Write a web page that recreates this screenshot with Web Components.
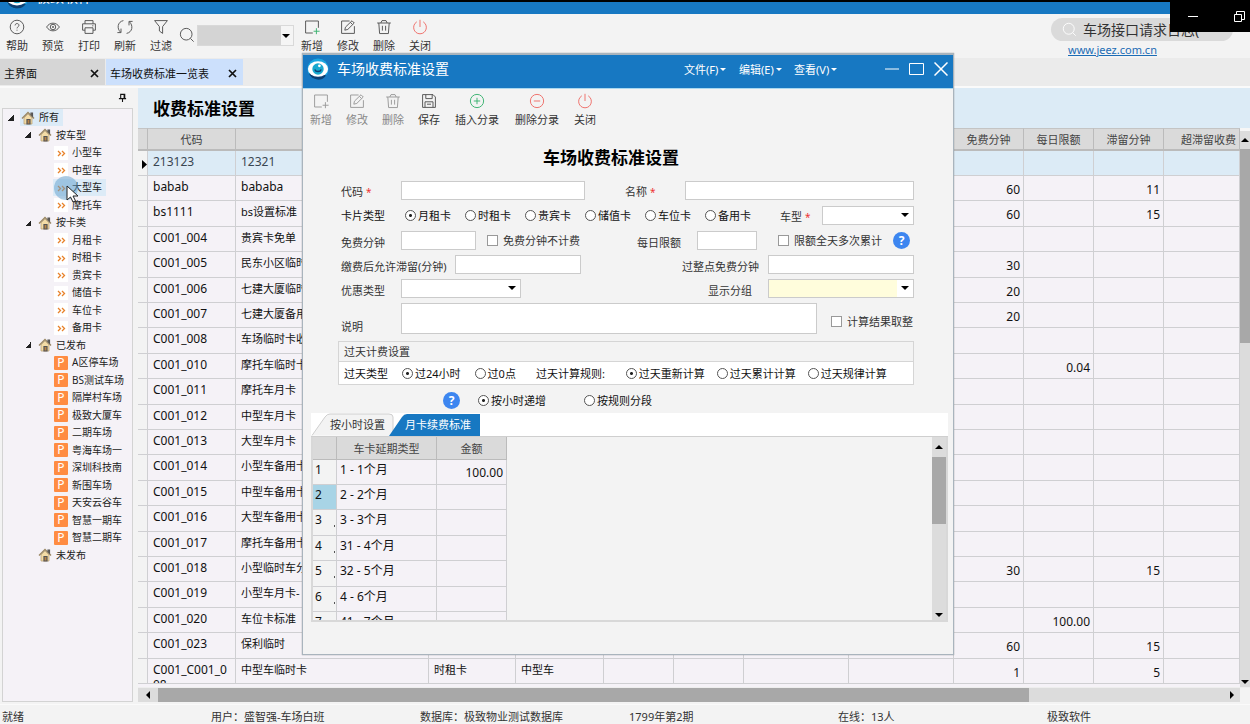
<!DOCTYPE html>
<html lang="zh-CN">
<head>
<meta charset="utf-8">
<title>极致软件</title>
<style>
html,body{margin:0;height:100%}
body{font:11px/15px "Noto Sans","Noto Sans CJK SC",sans-serif;color:#333;background:#f3f3f3;overflow:hidden}
</style>
</head>
<body>
<parking-app></parking-app>
<script>
const define=(name,html,setup)=>{
  const t=document.createElement('template');
  t.innerHTML=html;
  customElements.define(name,class extends HTMLElement{
    constructor(){super();this.attachShadow({mode:'open'}).append(t.content.cloneNode(true));}
    connectedCallback(){if(setup)setup.call(this,this.shadowRoot);}
  });
};

const house='<path d="M1 7.5 7 1.5l6 6" fill="none" stroke="#9a8763" stroke-width="1.4"/><path d="M3 7v6h8V7L7 3z" fill="#f3dca6" stroke="#b59c6e" stroke-width=".7"/><path d="M6 13V8.5h3V13z" fill="#b98548"/><path d="M10 2h1.5v3L10 3.6z" fill="#9a8763"/>';
const ICONS={
 help:[20,'<circle cx="10" cy="10" r="8.500"/><path d="M7.6 8c.1-3.2 4.9-3 4.8 0 0 1.700-2.400 1.900-2.400 3.700M10 13.400v1.200"/>'],
 eye:[20,'<path d="M2 10c4-6.4 12-6.4 16 0-4 6.4-12 6.4-16 0z"/><circle cx="10" cy="10" r="3.4"/><circle cx="10" cy="10" r=".8"/>'],
 print:[20,'<path d="M5 6V2h10v4M5 14H2V6h16v8h-3M5 11h10v7H5zM14 8.5h1.5"/>'],
 refresh:[20,'<path d="M8 2C.5 3.500-.5 12 4.500 16.500M5 12v5H.5M12 18c7.500-1.500 8.500-10 3.500-14.500M15 8V3h4.500"/>'],
 filter:[20,'<path d="M2 2h16l-6 7.500v8.500l-4-3V9.500z"/>'],
 search:[20,'<circle cx="9" cy="9" r="7.300"/><path d="m14.300 14.300 4 4"/>'],
 add:[20,'<path d="M11 17.500H2v-15h16V11"/><path class="acc" d="M15.500 11.500v7.500M12 15.300h7.500"/>'],
 edit:[20,'<path d="M18 9v9H2V2.500h10M6 14l.8-3.800L15 2.200l2.800 2.800-8 8zM13 4.200l2.800 2.800M7 17"/>'],
 trash:[20,'<path d="M1.500 5h17M6 5l1.500-3h5L14 5M3.500 5l1 13.200h11l1-13.200M8 8.500v6M12 8.500v6"/>'],
 power:[20,'<path d="M6 3.500C-1 8 2 18.500 10 18.500S21 8 14 3.500M10 1v9"/>'],
 save:[20,'<path d="M2 2h13l3 3v13H2zM6 2v5h8V2M5 18v-7h10v7M7.500 14h5"/>'],
 plus:[20,'<circle cx="10" cy="10" r="8.300"/><path d="M10 6v8M6 10h8"/>'],
 minus:[20,'<circle cx="10" cy="10" r="8.300"/><path d="M6 10h8"/>'],
 house:[14,house],
 logo:[24,'<circle cx="12" cy="12" r="11.500" fill="#1aa6e0" stroke="none"/><path d="M2 17a11 11 0 0 0 19 2l-4-1z" fill="#0c3f73" stroke="none"/><ellipse cx="12" cy="12" rx="11" ry="8.500" fill="#fff" stroke="none"/><circle cx="12" cy="12" r="6.200" fill="#17a8cf" stroke="none"/><path d="M8.500 12.500c1 3 6 3 7 0" stroke="#0c3f73" stroke-width="1.500"/><circle cx="13.500" cy="8.500" r="1.500" fill="#fff" stroke="none"/>'],
 pin:[10,'<path d="M3 1h4.500v4.500H3zM1 5.700h8M5 5.700V9.500M6.800 1v4.500" stroke="#111"/>']
};
define('app-icon','<style>:host{display:block;width:16px;height:16px;color:#555}svg{display:block;width:100%;height:100%;overflow:visible}.acc{stroke:var(--accent,currentColor)}</style>',function(r){
  const [n,p]=ICONS[this.getAttribute('name')];
  r.innerHTML+=`<svg viewBox="0 0 ${n} ${n}" fill="none" stroke="currentColor" stroke-width="1.2" aria-hidden="true">${p}</svg>`;
});

define('tool-button',`<style>:host{display:block;flex:none;width:36px;--accent:#3cb371}:host([wide]){width:60px}
button{all:unset;display:flex;flex-direction:column;align-items:center;gap:3px;width:100%;color:#333;cursor:default}
app-icon{color:#555}:host([tone=red]) app-icon{color:#ee6f6a}:host([tone=green]) app-icon{color:#3cb371}
:host([off]){--accent:#9a9a9a}:host([off]) button{color:#888}:host([off]) app-icon{color:#9a9a9a}</style>
<button type="button"><span id="i"></span><slot></slot></button>`,function(r){
  r.getElementById('i').innerHTML=`<app-icon name="${this.getAttribute('icon')}"></app-icon>`;
  r.querySelector('button').disabled=this.hasAttribute('off');
});

define('title-strip',`<style>:host{display:block;height:12px;border-top:2px solid #000;background:#1778c2;overflow:hidden;color:#fff}
div{display:flex;align-items:center;gap:7px;height:24px;margin-top:-17px;padding-left:5px;font-size:14px;line-height:20px}
app-icon{width:24px;height:24px}</style>
<div><app-icon name="logo"></app-icon><span>极致软件</span></div>`);

define('caption-box',`<style>:host{display:flex;justify-content:space-between;align-items:center;width:80px;height:32px;background:#000;box-sizing:border-box;padding:0 5px 0 18px}
button{all:unset;display:block}svg{display:block}</style>
<button type="button" aria-label="最小化"><svg width="10" height="10"><path d="M0 5.500h10" stroke="#fff"/></svg></button>
<button type="button" aria-label="还原"><svg width="11" height="11" fill="none" stroke="#fff"><path d="M.5 3.500h7v7h-7zM2.500 3.500v-3h8v8h-3"/></svg></button>`);

define('main-toolbar',`<style>:host{display:flex;align-items:flex-start;height:39px;padding-top:5px;background:#f3f3f3}
tool-button:first-of-type{margin-left:-1px}
.find{display:flex;align-items:center;width:115px;gap:2px;padding-top:5px;height:22px}
.combo{display:flex;box-sizing:border-box;width:97px;height:21px;border:1px solid #d9d9d9;background:#f5f5f5;position:relative}
input{all:unset;flex:1;background:#d4d4d4;margin-right:12px;min-width:0}
.combo::after{content:"";position:absolute;right:3px;top:8px;border:4px solid transparent;border-top-color:#000;border-bottom:0}
.right{margin-left:auto;width:199px}
.pill{display:flex;align-items:center;gap:6px;box-sizing:border-box;width:182px;height:23px;border-radius:12px;background:#dadada;padding-left:11px;font-size:14px;line-height:20px;margin-top:-1px}
.pill app-icon{color:#fff;flex:none;width:15px;height:15px}
.pill input{background:none;margin:0;color:#333;width:140px}
a{display:block;margin:1px 0 0 17px;color:#1b6cb5;text-decoration:underline}
</style>
<tool-button icon="help">帮助</tool-button><tool-button icon="eye">预览</tool-button><tool-button icon="print">打印</tool-button><tool-button icon="refresh">刷新</tool-button><tool-button icon="filter">过滤</tool-button>
<div class="find"><app-icon name="search"></app-icon><div class="combo"><input aria-label="查找"></div></div>
<tool-button icon="add">新增</tool-button><tool-button icon="edit">修改</tool-button><tool-button icon="trash">删除</tool-button><tool-button icon="power" tone="red">关闭</tool-button>
<div class="right"><div class="pill"><app-icon name="search"></app-icon><input aria-label="搜索" value="车场接口请求日志("></div><a href="#">www.jeez.com.cn</a></div>`);

define('doc-tabs',`<style>:host{display:flex;align-items:center;height:28px;background:#ebebeb;border-bottom:2px solid #fafafa;gap:1px;color:#111}
button{all:unset;box-sizing:border-box;display:flex;align-items:center;justify-content:space-between;height:26px;padding-top:2px;background:#d6d6d6;width:105px;padding:2px 6px 0 4px}
button[aria-selected=true]{background:#cce0fc;width:137px}svg{display:block}</style>
<button role="tab">主界面<svg width="9" height="9" stroke="#111" stroke-width="1.700"><path d="m1 1 7 7M8 1 1 8"/></svg></button>
<button role="tab" aria-selected="true">车场收费标准一览表<svg width="9" height="9" stroke="#111" stroke-width="1.700"><path d="m1 1 7 7M8 1 1 8"/></svg></button>`);

const TREE=[[0,'所有'],[1,'按车型'],[2,'小型车'],[2,'中型车'],[2,'大型车'],[2,'摩托车'],[1,'按卡类'],[2,'月租卡'],[2,'时租卡'],[2,'贵宾卡'],[2,'储值卡'],[2,'车位卡'],[2,'备用卡'],[1,'已发布'],
[3,'A区停车场'],[3,'BS测试车场'],[3,'隔岸村车场'],[3,'极致大厦车'],[3,'二期车场'],[3,'粤海车场一'],[3,'深圳科技南'],[3,'新围车场'],[3,'天安云谷车'],[3,'智慧一期车'],[3,'智慧二期车'],[1,'未发布']];
define('nav-tree',`<style>:host{display:flex;flex-direction:column;width:138px;flex:none;background:#f3f3f3}
.pin{display:flex;justify-content:flex-end;height:20px;padding:5px 11px 0 0;box-sizing:border-box}.pin app-icon{width:9px;height:10px}
ul{list-style:none;margin:0 5px 2px 2px;padding:0;flex:1;box-sizing:border-box;border:1px solid #d3d3d3;background:#f5f2f7;overflow:hidden;font-size:10px;color:#222;white-space:nowrap}
li{display:flex;align-items:center;height:17px;position:relative}li:nth-child(even){height:18px}
li i{flex:none;width:6px;height:6px;margin-right:7px}
li i.open{background:linear-gradient(135deg,transparent 50%,#222 50%)}
.l0{padding-left:5px}.l1{padding-left:22px}.l2,.l3{padding-left:51px}
.it{display:flex;align-items:center;height:17px;gap:4px;padding:0 4px 0 1px;margin-left:-1px}
.hot{background:#dcebf7}
app-icon{width:14px;height:14px}
.ar,.p{display:block;width:14px;height:14px;background:#fff}
.hot .ar{background:none}
.p{background:#ff8c42;color:#fff;text-align:center;font-size:12px;line-height:14px;border-radius:1px}
.mouse{position:absolute;left:50px;top:-3px;width:27px;height:36px;z-index:2}</style>
<div class="pin"><app-icon name="pin"></app-icon></div><ul></ul>`,function(r){
  r.querySelector('ul').innerHTML=TREE.map(([l,t])=>{
    const ico=l<2?'<app-icon name="house"></app-icon>':l==2?'<svg class="ar" viewBox="0 0 14 14" fill="none" stroke="#e8822a" stroke-width="1.3"><path d="m4 5 2.500 2.500L4 10M8 5l2.500 2.500L8 10"/></svg>':'<span class="p">P</span>';
    const mouse=t=='大型车'?'<svg class="mouse" viewBox="0 0 27 36"><circle cx="13" cy="12" r="12" fill="#5f9fcd" opacity=".5"/><path d="M14 10v14l3.500-3 2.500 5 2.500-1.200-2.500-4.800h5z" fill="#fff" stroke="#222"/></svg>':'';
    return `<li class="l${l}">${l<2?`<i class="${t!='未发布'?'open':''}"></i>`:''}<span class="it ${t=='所有'||t=='大型车'?'hot':''}">${ico}${t}</span>${mouse}</li>`;}).join('');
});

define('scroll-bar',`<style>:host{display:flex;align-items:center;background:#dcdcdc;flex:none}
:host([dir=v]){flex-direction:column}b{display:block;background:#a8a8a8}svg{display:block;flex:none}</style>`,function(r){
  const v=this.getAttribute('dir')=='v',[a,s,w]=this.getAttribute('thumb').split(',').map(Number);
  const tri=(p,m)=>`<svg width="8" height="8" style="margin:${v?m:0}px ${v?0:m}px"><path d="${p}" fill="#000"/></svg>`;
  r.innerHTML+=tri(v?'M0 6l4-4 4 4z':'M6 0v8L2 4z',a)+`<b style="flex:${s} 1 0;${v?'width:100%':'align-self:stretch'}"></b><span style="flex:${w} 1 0"></span>`+tri(v?'M0 2l4 4 4-4z':'M2 0v8l4-4z',v?1:4);
});

const ROWS=[['213123','12321'],['babab','bababa','60','','11'],['bs1111','bs设置标准','60','','15'],['C001_004','贵宾卡免单'],['C001_005','民东小区临时','30'],['C001_006','七建大厦临时','20'],['C001_007','七建大厦备用','20'],['C001_008','车场临时卡收'],['C001_010','摩托车临时卡','','0.04'],['C001_011','摩托车月卡'],['C001_012','中型车月卡'],['C001_013','大型车月卡'],['C001_014','小型车备用卡'],['C001_015','中型车备用卡'],['C001_016','大型车备用卡'],['C001_017','摩托车备用卡'],['C001_018','小型临时车分','30','','15'],['C001_019','小型车月卡-'],['C001_020','车位卡标准','','100.00'],['C001_023','保利临时','60','','15'],['C001_C001_008','中型车临时卡','1','','5']];
define('rate-grid',`<style>:host{display:flex;flex-direction:column;flex:1;min-width:0}
h1{margin:0;height:40px;box-sizing:border-box;padding:9px 0 0 15px;background:#dcebf6;font-size:17px;line-height:24px;color:#000}
.mid{display:flex;flex:1;min-height:0}.view{flex:1;min-width:0;overflow:hidden;background:#f5f2f7}
table{border-collapse:separate;border-spacing:0;table-layout:fixed;width:100%;color:#111}
th{height:23px;background:#dadada;font-weight:400;color:#444;padding:0;border-right:1px solid #bbb;border-bottom:2px solid #bbb;box-sizing:border-box;border-top:1px solid #c4c4c4}
td{padding:0;height:25px;box-sizing:border-box;border-right:1px solid #cfcfd2;border-bottom:1px solid #cfcfd2;vertical-align:top}
tr:nth-child(5n+3) td,tr:nth-child(5n) td{height:26px}
td div{height:24px;overflow:hidden;padding:3px 4px 0 5px;box-sizing:border-box;word-break:break-all}
.n div,.w div{font-size:12px}.n div{padding:6px 3px 0 0;text-align:right}
td:first-child{background:#f3f3f3}tr.sel td{background:#dcebf6;color:#3a4652}tr.sel td:first-child{background:#f3f3f3}
tr.sel td:first-child div{padding:9px 0 0 3px}
scroll-bar[dir=v]{width:10px}.view+scroll-bar{border-top:3px solid #f6f6f6}
.bot{display:flex;padding-right:10px;border-top:1px solid #eee}
.bot scroll-bar{flex:1;height:14px;margin-bottom:2px}</style>
<h1>收费标准设置</h1><div class="mid"><div class="view"><table>
<colgroup><col style="width:10px"><col style="width:88px"><col style="width:193px"><col style="width:87px"><col style="width:88px"><col style="width:70px"><col style="width:70px"><col style="width:105px"><col style="width:105px"><col style="width:70px"><col style="width:70px"><col style="width:70px"><col></colgroup>
<thead><tr><th></th><th>代码</th><th></th><th></th><th></th><th></th><th></th><th></th><th></th><th>免费分钟</th><th>每日限额</th><th>滞留分钟</th><th style="text-align:right;padding-right:3px">超滞留收费</th></tr></thead><tbody></tbody></table></div><scroll-bar dir="v" thumb="5,194,333"></scroll-bar></div>
<div class="bot"><scroll-bar dir="h" thumb="6,872,195"></scroll-bar></div>`,function(r){
  const td=(v,c)=>`<td class="${c||''}"><div>${v||''}</div></td>`;
  r.querySelector('tbody').innerHTML=ROWS.map((x,i)=>`<tr class="${i?'':'sel'}">`+td(i?'':'<svg width="6" height="9" style="display:block"><path d="M1 0v9l5-4.500z"/></svg>','')+td(x[0],'w')+td(x[1],/[^\w]/.test(x[1])?'':'w')+td(i==20?'时租卡':'','')+td(i==20?'中型车':'','')+td()+td()+td()+td()+td(x[2],'n')+td(x[3],'n')+td(x[4],'n')+td()+'</tr>').join('');
});

define('status-line',`<style>:host{display:flex;height:20px;background:#f3f3f3;border-top:1px solid #fafafa;box-sizing:border-box;line-height:24px;overflow:hidden}span{flex:209 1 0;padding-left:2px;white-space:nowrap}span:last-child{flex-grow:205}</style>
<span>就绪</span><span>用户：盛智强-车场白班</span><span>数据库：极致物业测试数据库</span><span>1799年第2期</span><span>在线：13人</span><span>极致软件</span>`);

const radio=(g,t,c)=>`<label class="rd"><input type="radio" name="${g}"${c?' checked':''}>${t}</label>`;
define('rate-form',`<style>:host{display:block;padding:21px 39px 0 38px;color:#333}
.row{display:flex;align-items:center;height:19px;margin-bottom:6px;white-space:nowrap}
.row:nth-of-type(n+3){margin-bottom:5px}
.row>label:first-child,.row>span:first-child{width:60px;flex:none;padding-top:3px}
.r{display:flex;align-items:center;margin-left:auto}
.r>label:first-child{flex:none;padding-top:3px}
input,select,textarea{box-sizing:border-box;margin:0;border:1px solid #cbcbcb;border-radius:0;background:#fff;font:inherit;height:19px;padding:0 3px;outline:0;resize:none;flex:none}
.fill{flex:1;min-width:0}
.s{position:relative;display:flex}.s select{appearance:none;width:100%}
.s::after{content:"";position:absolute;right:5px;top:7px;border:4px solid transparent;border-top-color:#000;border-bottom:0}
.y select{background:linear-gradient(to left,#fff 16px,#fffddc 16px)}
input[type=checkbox]{appearance:none;width:11px;height:11px;padding:0;border-color:#999;margin-right:5px}
.ck{display:flex;align-items:center}
.rd{display:flex;align-items:center;gap:2px;color:#111;width:60px;flex:none;white-space:nowrap}
input[type=radio]{appearance:none;width:11px;height:11px;padding:0;border:1px solid #555;border-radius:50%}
input[type=radio]:checked{background:radial-gradient(circle,#222 1px,#fff 2px)}
em{color:#e33;font-style:normal;margin-left:3px;font-size:10px}
.q{all:unset;display:block;flex:none;width:17px;height:17px;border-radius:50%;background:#3d86f0;color:#fff;font-weight:700;font-size:12px;line-height:17px;text-align:center}
.radios{display:flex;padding-left:4px}
textarea{height:31px;width:416px}
fieldset{margin:7px 0 0 -3px;padding:0;border:1px solid #d5d5d5;background:#fff;min-width:0}
.row+fieldset{margin-top:7px}
legend{float:left;width:100%;padding:0 0 0 5px;box-sizing:border-box;height:20px;line-height:20px;background:#f3f3f3;border-bottom:1px solid #d5d5d5}
.in{clear:both;display:flex;align-items:center;height:22px;padding-left:5px;color:#111}
.in .rd{width:auto}
.mode{display:flex;align-items:center;height:18px;margin-top:6px;padding-left:102px}
</style>
<div class="row"><label for="code">代码<em>*</em></label><input id="code" style="width:184px"><div class="r" style="width:289px"><label for="nm" style="width:60px">名称<em>*</em></label><input id="nm" class="fill"></div></div>
<div class="row"><span style="color:#111;padding:0">卡片类型</span><div class="radios">${radio('card','月租卡',1)+radio('card','时租卡')+radio('card','贵宾卡')+radio('card','储值卡')+radio('card','车位卡')+radio('card','备用卡')}</div><div class="r"><label for="ct" style="width:42px">车型<em>*</em></label><div class="s" style="width:92px"><select id="ct"></select></div></div></div>
<div class="row"><label for="fm">免费分钟</label><input id="fm" style="width:75px"><label class="ck" style="margin-left:11px"><input type="checkbox">免费分钟不计费</label><div class="r" style="width:277px"><label for="dl" style="width:60px">每日限额</label><input id="dl" style="width:60px"><label class="ck" style="margin-left:21px"><input type="checkbox">限额全天多次累计</label><button type="button" class="q" style="margin:0 4px 0 auto">?</button></div></div>
<div class="row"><label for="st" style="width:114px">缴费后允许滞留(分钟)</label><input id="st" style="width:126px"><div class="r" style="width:232px"><label for="wh" style="width:86px">过整点免费分钟</label><input id="wh" class="fill"></div></div>
<div class="row"><label for="yh">优惠类型</label><div class="s" style="width:120px"><select id="yh"></select></div><div class="r" style="width:206px"><label for="gp" style="width:60px">显示分组</label><div class="s y fill"><select id="gp"></select></div></div></div>
<div class="row" style="height:31px"><label for="ds" style="align-self:flex-end">说明</label><textarea id="ds"></textarea><label class="ck" style="margin-left:14px;padding-top:6px"><input type="checkbox">计算结果取整</label></div>
<fieldset><legend>过天计费设置</legend><div class="in"><span style="width:58px">过天类型</span>${radio('day','过24小时',1)}<span style="width:14px"></span>${radio('day','过0点')}<span style="margin:0 21px 0 20px">过天计算规则:</span><div class="in" style="padding:0;gap:12px">${radio('rule','过天重新计算',1)+radio('rule','过天累计计算')+radio('rule','过天规律计算')}</div></div></fieldset>
<div class="mode"><button type="button" class="q" style="margin-right:18px">?</button><div style="width:106px">${radio('mode','按小时递增',1)}</div>${radio('mode','按规则分段')}</div>`);

define('renew-tabs',`<style>:host{display:flex;flex-direction:column;margin:4px 5px 0 8px}
.tabs{display:flex;height:23px;background:#fff;border-bottom:1px solid #cfcfcf}
button{all:unset;position:relative;display:block;box-sizing:border-box;width:83px;height:23px;padding-left:19px;line-height:23px;color:#333;white-space:nowrap}
button+button{width:91px;margin-left:-5px;color:#fff;padding-left:16px;z-index:1}
button svg{position:absolute;left:0;top:0;z-index:-1}button{z-index:0}
.body{display:flex;justify-content:space-between;height:183px;border:1px solid #d8d8d8;border-width:0 2px 2px;overflow:hidden}
table{border-spacing:0;table-layout:fixed;width:194px;color:#111;height:max-content}
th{height:23px;background:#dadada;font-weight:400;color:#444;padding:0;box-sizing:border-box;border-right:1px solid #bbb;border-bottom:1px solid #bbb}
td{height:25px;padding:2px 3px 0;box-sizing:border-box;border-right:1px solid #cfcfd2;border-bottom:1px solid #cfcfd2;background:#f5f2f7;vertical-align:top;line-height:15px;font-size:12px}
tr:nth-child(5n+3) td,tr:nth-child(5n) td{height:26px}
td:first-child{background:#f3f3f3;padding-left:2px}tr td.on{background:#a8d4e6}
tr td.dot{background:linear-gradient(#555,#555) no-repeat 21px 15px/1px 2px #f3f3f3}
td:last-child{text-align:right;padding-top:5px}
scroll-bar{width:14px}</style>
<div class="tabs"><button type="button"><svg width="83" height="23"><path d="M1 22.500 14 4q2-3 5-3h59q4 0 4 3v19" fill="#f3f3f3" stroke="#cfcfcf"/></svg>按小时设置</button><button type="button"><svg width="91" height="23"><path d="M0 23 13 4q2-3 5-3h73v22z" fill="#1778c2"/></svg>月卡续费标准</button></div>
<div class="body"><table><colgroup><col style="width:24px"><col style="width:100px"><col></colgroup><thead><tr><th></th><th>车卡延期类型</th><th>金额</th></tr></thead><tbody></tbody></table><scroll-bar dir="v" thumb="6,67,86"></scroll-bar></div>`,function(r){
  r.querySelector('tbody').innerHTML=['1 - 1','2 - 2','3 - 3','31 - 4','32 - 5','4 - 6','41 - 7'].map((t,i)=>`<tr><td class="${i==1?'on':i>1&&i<6?'dot':''}">${i+1}</td><td>${t}个月</td><td>${i?'':'100.00'}</td></tr>`).join('');
});

define('rate-dialog',`<style>:host{display:flex;flex-direction:column;box-sizing:border-box;width:652px;height:602px;border:1px solid #a9b4bd;background:#f3f3f3;border-width:2px 1px 1px;box-shadow:0 0 1px #888}
header{display:flex;align-items:center;height:34px;box-sizing:border-box;background:#1778c2;color:#fff;padding:0 5px 5px 4px;border-bottom:1px solid #a9d8f0;flex:none}
header app-icon{width:22px;height:22px}h2{margin:0 auto 0 8px;font-size:14px;line-height:20px;font-weight:400}
button{all:unset;display:flex;align-items:center;gap:2px;width:55px}button::after{content:"";border:3px solid transparent;border-top-color:#fff;border-bottom:0}
button.c{width:auto;margin-left:10px}button.c::after{content:none}nav{display:flex;margin-right:26px}
.bar{display:flex;padding:4px 0 0}
h3{margin:19px 0 0;text-align:center;font-size:17px;line-height:24px;color:#000;padding-right:34px}
rate-form{padding-top:11px}
</style>
<header><app-icon name="logo"></app-icon><h2>车场收费标准设置</h2><nav><button type="button">文件(F)</button><button type="button">编辑(E)</button><button type="button">查看(V)</button></nav>
<button type="button" class="c" aria-label="最小化"><svg width="14" height="14"><path d="M0 7h14" stroke="#fff"/></svg></button><button type="button" class="c" aria-label="最大化"><svg width="15" height="12"><path d="M.5.5h14v11H.5z" stroke="#fff" fill="none"/></svg></button><button type="button" class="c" aria-label="关闭"><svg width="14" height="14"><path d="m.5.5 13 13M13.500.5.5 13.500" stroke="#fff" stroke-width="1.500"/></svg></button></header>
<div class="bar"><tool-button icon="add" off>新增</tool-button><tool-button icon="edit" off>修改</tool-button><tool-button icon="trash" off>删除</tool-button><tool-button icon="save">保存</tool-button><tool-button icon="plus" tone="green" wide>插入分录</tool-button><tool-button icon="minus" tone="red" wide>删除分录</tool-button><tool-button icon="power" tone="red">关闭</tool-button></div>
<h3>车场收费标准设置</h3><rate-form></rate-form><renew-tabs></renew-tabs>`);

define('parking-app',`<style>:host{display:flex;flex-direction:column;height:100vh;position:relative;overflow:hidden}
main{display:flex;flex:1;min-height:0}
caption-box{position:absolute;right:0;top:0;z-index:3}
rate-dialog{position:absolute;left:302px;top:53px;z-index:2}</style>
<title-strip></title-strip><main-toolbar></main-toolbar><doc-tabs></doc-tabs>
<main><nav-tree></nav-tree><rate-grid></rate-grid></main><status-line></status-line><rate-dialog></rate-dialog><caption-box></caption-box>`);
</script>
</body>
</html>
